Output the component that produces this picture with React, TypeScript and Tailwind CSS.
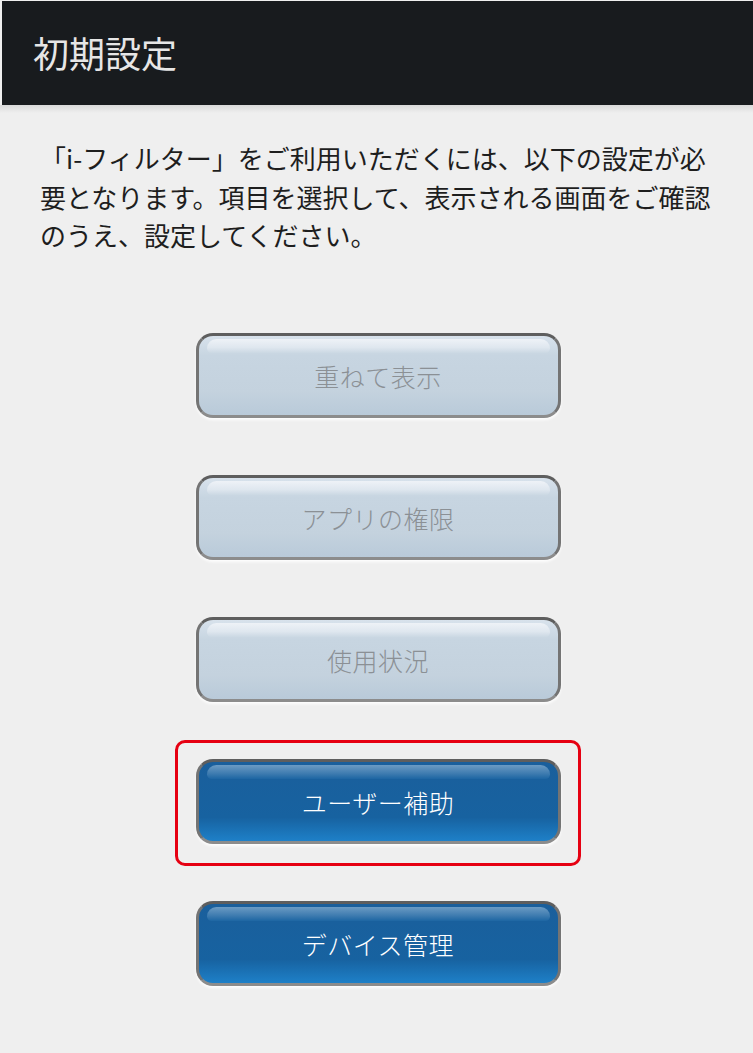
import React from 'react'

type Item = { label: string; active: boolean; focused?: boolean }

const items: Item[] = [
  { label: '重ねて表示', active: false },
  { label: 'アプリの権限', active: false },
  { label: '使用状況', active: false },
  { label: 'ユーザー補助', active: true, focused: true },
  { label: 'デバイス管理', active: true },
]

function GlossButton({ label, active }: { label: string; active: boolean }) {
  return (
    <button
      className={`relative w-[365px] h-[85px] rounded-[17px] border-[3px] border-t-[#5e5e5e] border-x-[#747474] border-b-[#8c8c8c] shadow-[0_2px_3px_rgba(255,255,255,0.9)] overflow-hidden flex items-center justify-center ${
        active
          ? 'bg-[linear-gradient(180deg,#1a5f9c_0%,#1762a0_70%,#1b74b8_88%,#1e80c8_100%)]'
          : 'bg-[linear-gradient(180deg,#d8e2ec_0%,#c7d5e1_25%,#c4d2de_70%,#b9cad9_100%)]'
      }`}
    >
      <span
        className={`absolute left-[8px] right-[8px] top-[3px] h-[14px] rounded-t-[12px] rounded-b-[6px] ${
          active
            ? 'bg-[linear-gradient(180deg,#6b9bc4_0%,#3f7cb0_60%,#1d66a3_100%)]'
            : 'bg-[linear-gradient(180deg,#eef2f7_0%,#dfe7ef_60%,#cbd8e3_100%)]'
        }`}
      />
      <span
        className={`relative text-[25px] font-light tracking-[0.5px] mt-[4px] ${active ? 'text-white' : 'text-[#8b9095]'}`}
      >
        {label}
      </span>
    </button>
  )
}

export default function App() {
  return (
    <div
      className="w-[753px] h-[1053px] bg-[#efefef] overflow-hidden"
      style={{ fontFamily: '"Noto Sans CJK JP", "Noto Sans", sans-serif' }}
    >
      <header className="h-[104px] mt-px ml-[2px] bg-[#181b1e] flex items-center pl-[31px] pb-[2px]">
        <h1 className="text-[36px] text-[#e6e6e6] font-normal">初期設定</h1>
      </header>
      <div className="h-[8px] bg-[linear-gradient(180deg,#d9d9d9_0%,#efefef_100%)]" />

      <p className="pl-[40px] pt-[26px] text-[26px] leading-[38.5px] text-[#1e1e1e] whitespace-nowrap">
        「i-フィルター」をご利用いただくには、以下の設定が必
        <br />
        要となります。項目を選択して、表示される画面をご確認
        <br />
        のうえ、設定してください。
      </p>

      <div className="mt-[59px] flex flex-col items-center gap-[16px]">
        {items.map((it) => (
          <div
            key={it.label}
            className={`w-[406px] h-[126px] pt-[16px] flex justify-center rounded-[10px] ml-[3px] ${
              it.focused ? 'border-[3px] border-[#e60012]' : 'border-[3px] border-transparent'
            }`}
          >
            <GlossButton label={it.label} active={it.active} />
          </div>
        ))}
      </div>
    </div>
  )
}
